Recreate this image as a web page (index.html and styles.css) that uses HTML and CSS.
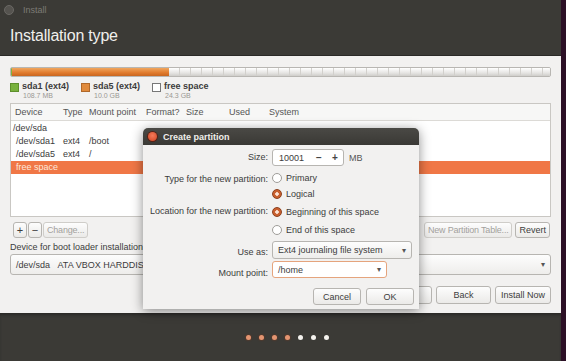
FILE: index.html
```html
<!DOCTYPE html>
<html lang="en">
<head>
    <meta charset="UTF-8">
    <title>Install</title>
    <link rel="stylesheet" href="styles.css">
</head>
<body>
<div class="screen">
    <div class="window">
        <div class="titlebar">
            <span class="tb-icon"></span>
            <span class="tb-title">Install</span>
        </div>
        <div class="header">
            <h1>Installation type</h1>
        </div>

        <div class="content">
            <!-- partition map -->
            <div class="pbar">
                <div class="pbar-sda1"></div>
                <div class="pbar-sda5"></div>
                <div class="pbar-free"></div>
            </div>
            <div class="legend">
                <div class="legend-item">
                    <span class="swatch green"></span>
                    <div><div class="l-name">sda1 (ext4)</div><div class="l-size">108.7 MB</div></div>
                </div>
                <div class="legend-item">
                    <span class="swatch orange"></span>
                    <div><div class="l-name">sda5 (ext4)</div><div class="l-size">10.0 GB</div></div>
                </div>
                <div class="legend-item">
                    <span class="swatch white"></span>
                    <div><div class="l-name">free space</div><div class="l-size">24.3 GB</div></div>
                </div>
            </div>

            <!-- partition table -->
            <div class="ptable">
                <div class="row thead">
                    <span>Device</span><span>Type</span><span>Mount point</span><span>Format?</span><span>Size</span><span>Used</span><span>System</span>
                </div>
                <div class="tbody">
                    <div class="row"><span class="dev0">/dev/sda</span></div>
                    <div class="row"><span class="dev1">/dev/sda1</span><span>ext4</span><span>/boot</span></div>
                    <div class="row"><span class="dev1">/dev/sda5</span><span>ext4</span><span>/</span></div>
                    <div class="row selected"><span class="dev1">free space</span></div>
                </div>
            </div>

            <div class="table-tools">
                <div class="btn-group">
                    <button class="btn small">+</button>
                    <button class="btn small">&minus;</button>
                    <button class="btn disabled">Change...</button>
                </div>
                <div class="btn-group right">
                    <button class="btn disabled">New Partition Table...</button>
                    <button class="btn">Revert</button>
                </div>
            </div>

            <div class="boot-label">Device for boot loader installation:</div>
            <div class="combo wide">
                <span>/dev/sda&nbsp;&nbsp;&nbsp;ATA VBOX HARDDISK (34.4 GB)</span>
                <span class="arrow">&#9662;</span>
            </div>

            <div class="nav-buttons">
                <button class="btn nav">Quit</button>
                <button class="btn nav">Back</button>
                <button class="btn nav">Install Now</button>
            </div>
        </div>

        <div class="footer">
            <span class="dot done"></span>
            <span class="dot done"></span>
            <span class="dot done"></span>
            <span class="dot done"></span>
            <span class="dot"></span>
            <span class="dot"></span>
            <span class="dot"></span>
        </div>
    </div>

    <!-- Create partition dialog -->
    <div class="dialog">
        <div class="dlg-title">
            <span class="dlg-close"></span>
            <span>Create partition</span>
        </div>
        <div class="dlg-body">
            <label>Size:</label>
            <div class="ctrl">
                <div class="spin">
                    <span class="spin-val">10001</span>
                    <span class="spin-btn">&minus;</span>
                    <span class="spin-btn">+</span>
                </div>
                <span class="unit">MB</span>
            </div>

            <label class="gap-s">Type for the new partition:</label>
            <div class="ctrl gap-s"><span class="radio"></span>Primary</div>
            <label></label>
            <div class="ctrl"><span class="radio on"></span>Logical</div>

            <label>Location for the new partition:</label>
            <div class="ctrl"><span class="radio on"></span>Beginning of this space</div>
            <label></label>
            <div class="ctrl"><span class="radio"></span>End of this space</div>

            <label class="gap">Use as:</label>
            <div class="ctrl gap">
                <div class="combo use-as"><span>Ext4 journaling file system</span><span class="arrow">&#9662;</span></div>
            </div>

            <label class="gap-m">Mount point:</label>
            <div class="ctrl gap-m">
                <div class="combo entry"><span>/home</span><span class="arrow">&#9662;</span></div>
            </div>
        </div>
        <div class="dlg-buttons">
            <button class="btn dlg">Cancel</button>
            <button class="btn dlg">OK</button>
        </div>
    </div>
</div>
</body>
</html>
```

FILE: styles.css
```css
body {
    margin: 0;
    background: #2c1026;
    font-family: 'Liberation Sans', 'DejaVu Sans', sans-serif;
    font-size: 9px;
    color: #3c3c3c;
}
.screen { position: relative; width: 566px; height: 361px; overflow: hidden; }
.window {
    width: 561px;
    height: 361px;
    display: flex;
    flex-direction: column;
    background: #f2f1f0;
}
.titlebar {
    height: 20px;
    background: #3b3a36;
    display: flex;
    align-items: center;
    gap: 9px;
    padding-left: 4px;
    color: #7c7a75;
    font-size: 9px;
}
.tb-icon {
    width: 8px; height: 8px;
    border-radius: 50%;
    border: 1px solid #6a6864;
    background: #55534f;
}
.header {
    height: 35px;
    background: #3b3a36;
    border-bottom: 1px solid #2a2927;
}
h1 {
    margin: 7px 0 0 10px;
    font-weight: normal;
    font-size: 16px;
    color: #f0efec;
    letter-spacing: -0.2px;
}
.content {
    flex: 1;
    padding: 11px 10px 0 10px;
    display: flex;
    flex-direction: column;
}
.pbar {
    height: 8px;
    display: flex;
    border: 1px solid #b8b6b2;
    border-radius: 2px;
    overflow: hidden;
}
.pbar-sda1 { width: 1px; background: #7cb342; }
.pbar-sda5 { width: 157px; background: linear-gradient(#f0a65e, #e07a2c 60%, #c9661f); }
.pbar-free {
    flex: 1;
    background:
        repeating-linear-gradient(90deg, transparent 0 10px, #d2d0cc 10px 11px),
        linear-gradient(#ffffff, #e6e5e3 60%, #cfcdca);
}
.legend {
    display: flex;
    gap: 12px;
    margin-top: 4px;
    height: 22px;
}
.legend-item { display: flex; gap: 3px; align-items: flex-start; }
.swatch {
    width: 7px; height: 7px;
    margin-top: 2px;
    border: 1px solid #888;
}
.swatch.green { background: #78b13d; border-color: #5e8f2c; }
.swatch.orange { background: #e08a3c; border-color: #b0682a; }
.swatch.white { background: #fff; border-color: #777; }
.l-name { font-weight: bold; color: #3c3c3c; font-size: 9px; line-height: 11px; }
.l-size { color: #9a9893; font-size: 7px; padding-left: 1px; }

.ptable {
    height: 112px;
    background: #fff;
    border: 1px solid #c9c7c3;
}
.row {
    display: grid;
    grid-template-columns: 48px 26px 57px 40px 43px 40px 1fr;
    height: 13px;
    line-height: 13px;
    color: #3c3c3c;
}
.row span { padding-left: 4px; white-space: nowrap; }
.thead {
    height: 16px;
    line-height: 16px;
    background: #f7f7f6;
    border-bottom: 1px solid #dcdad6;
    color: #555;
}
.tbody { padding-top: 1px; }
.row .dev0 { padding-left: 2px; }
.row .dev1 { padding-left: 5px; }
.row.selected { background: #f07746; color: #fde8dc; }

.table-tools {
    display: flex;
    justify-content: space-between;
    margin-top: 5px;
    padding: 0 1px 0 3px;
}
.btn-group { display: flex; gap: 1px; }
.btn-group.right { gap: 3px; }
.btn {
    font-family: inherit;
    font-size: 9px;
    height: 16px;
    padding: 0 5px;
    border: 1px solid #b7b5b1;
    border-radius: 3px;
    background: linear-gradient(#fdfdfd, #ebeae8);
    color: #3c3c3c;
}
.btn-group .btn { padding: 0 3px; }
.btn.small { width: 14px; padding: 0; font-size: 11px; line-height: 12px; }
.btn.disabled { color: #a3a19d; border-color: #cfcdc9; letter-spacing: -0.2px; }
.boot-label { margin-top: 4px; color: #3c3c3c; }
.combo {
    display: flex;
    justify-content: space-between;
    align-items: center;
    border: 1px solid #b7b5b1;
    border-radius: 3px;
    background: linear-gradient(#fdfdfd, #eeedeb);
    padding: 0 5px;
}
.combo.wide { height: 19px; margin-top: 2px; }
.arrow { font-size: 8px; color: #555; }
.nav-buttons {
    display: flex;
    justify-content: flex-end;
    gap: 4px;
    margin-top: 11px;
}
.btn.nav { height: 18px; min-width: 55px; }

.footer {
    margin-top: auto;
    height: 48px;
    background: #3b3a36;
    box-shadow: inset 0 3px 3px -1px #2a2927;
    display: flex;
    align-items: center;
    justify-content: center;
    gap: 8px;
    padding-left: 13px;
}
.dot {
    width: 5px; height: 5px;
    border-radius: 50%;
    background: #f4f2ee;
}
.dot.done { background: #e39572; box-shadow: 0 0 2px #8a3a1a; }

/* dialog */
.dialog {
    position: absolute;
    left: 143px;
    top: 128px;
    width: 276px;
    height: 181px;
    background: #f2f1f0;
    border-radius: 5px 5px 0 0;
    box-shadow: 0 2px 12px rgba(0,0,0,0.45);
    display: flex;
    flex-direction: column;
}
.dlg-title {
    height: 17px;
    background: linear-gradient(#4a4945, #3a3935);
    border-radius: 5px 5px 0 0;
    display: flex;
    align-items: center;
    gap: 6px;
    padding-left: 5px;
    color: #efeeea;
    font-weight: bold;
    font-size: 9px;
}
.dlg-close {
    width: 9px; height: 9px;
    border-radius: 50%;
    background: radial-gradient(circle at 50% 40%, #f47a5b, #d2431f);
    box-shadow: 0 0 0 1px #5a2015;
}
.dlg-body {
    display: grid;
    grid-template-columns: 120px 1fr;
    column-gap: 4px;
    padding: 5px 0 0 5px;
    row-gap: 3px;
    grid-auto-rows: 15px;
}
.dlg-body label {
    text-align: right;
    line-height: 15px;
    color: #3c3c3c;
    white-space: nowrap;
}
.dlg-body .gap-s { margin-top: 4px; }
.dlg-body .gap { margin-top: 5px; }
.dlg-body .gap-m { margin-top: 8px; }
.ctrl { display: flex; align-items: center; gap: 4px; color: #3c3c3c; }
.spin {
    display: flex;
    align-items: center;
    height: 15px;
    width: 70px;
    border: 1px solid #b7b5b1;
    border-radius: 3px;
    background: #fff;
}
.spin-val { flex: 1; padding-left: 6px; }
.spin-btn { width: 16px; text-align: center; font-weight: bold; font-size: 10px; color: #444; }
.unit { margin-left: 1px; color: #555; }
.radio {
    width: 8px; height: 8px;
    border-radius: 50%;
    border: 1px solid #9f9d99;
    background: #fff;
}
.radio.on {
    border-color: #8c3f1c;
    background: radial-gradient(circle, #fbe3d5 0 1.5px, #c9602f 2px);
}
.combo.use-as { width: 128px; height: 16px; }
.combo.entry {
    width: 103px;
    height: 15px;
    background: #fff;
    border-color: #e5a47d;
}
.dlg-buttons {
    margin-top: auto;
    display: flex;
    justify-content: flex-end;
    gap: 5px;
    padding: 0 5px 4px 0;
}
.btn.dlg { width: 48px; height: 17px; }
```
